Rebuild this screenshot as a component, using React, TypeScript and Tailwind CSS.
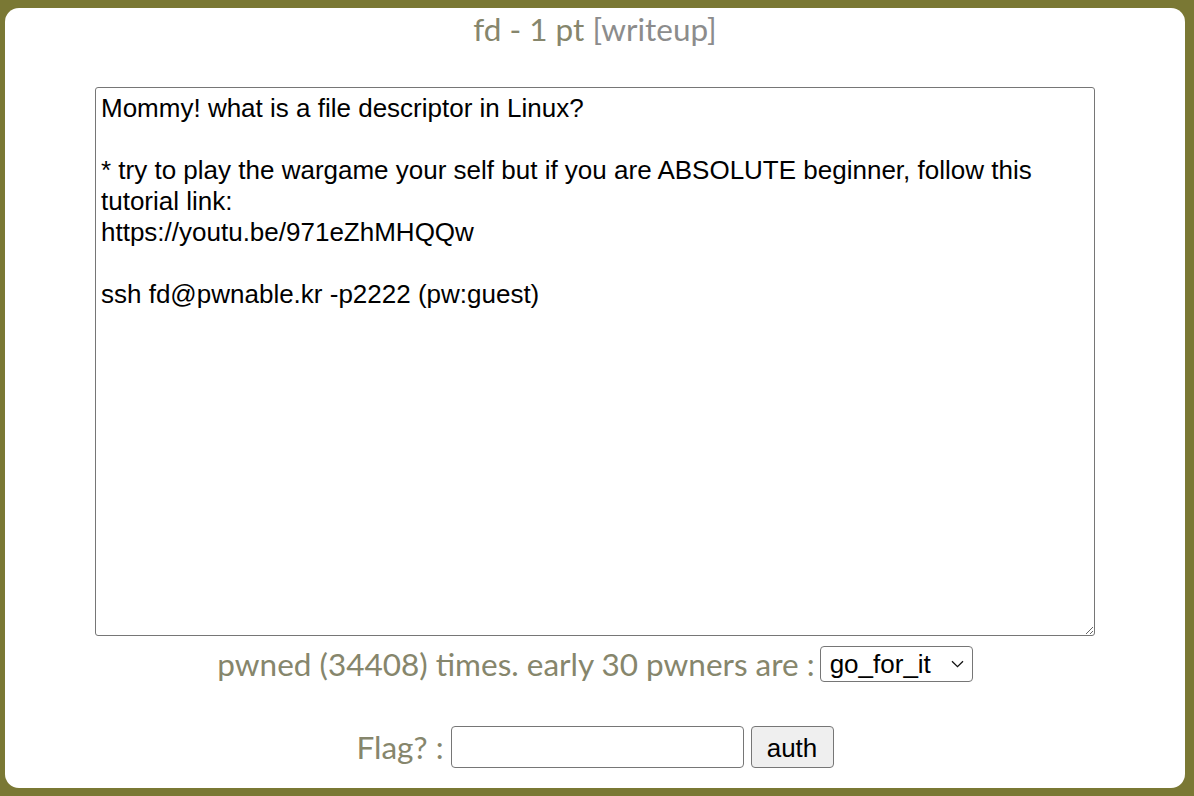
export default function App() {
  const desc =
    "Mommy! what is a file descriptor in Linux?\n\n* try to play the wargame your self but if you are ABSOLUTE beginner, follow this tutorial link:\nhttps://youtu.be/971eZhMHQQw\n\nssh fd@pwnable.kr -p2222 (pw:guest)";

  return (
    <div className="h-[796px] w-full bg-[#7a7834] pt-[8px] pb-[8px] pl-[5px] pr-[9px]">
      <div className="h-full bg-white rounded-[14px] flex flex-col items-center font-['Lato',sans-serif] text-[#86866c]">
        <div className="mt-[3px] text-[31.5px] leading-[36px]">
          fd - 1 pt <span className="text-[#8c8c8c]">[writeup]</span>
        </div>
        <textarea
          readOnly
          className="mt-[40px] w-[1000px] h-[549px] border border-[#767676] rounded-[3px] px-[5px] py-[5px] text-black text-[26px] leading-[31px] font-['Liberation_Sans',Arial,sans-serif] resize-y outline-none"
          defaultValue={desc}
        />
        <div className="mt-[10px] flex items-center gap-[5px] text-[31.5px] leading-[36px]">
          <span>pwned (34408) times. early 30 pwners are :</span>
          <div className="relative flex">
            <select className="h-[36px] w-[153px] border border-[#767676] rounded-[4px] pl-[9px] pr-[28px] text-black text-[26px] leading-[34px] font-['Liberation_Sans',Arial,sans-serif] bg-white appearance-none">
              <option>go_for_it</option>
            </select>
            <svg
              className="absolute right-[9px] top-[14px] pointer-events-none"
              width="13"
              height="8"
              viewBox="0 0 13 8"
              fill="none"
              stroke="#111"
              strokeWidth="1.3"
            >
              <path d="M1 1.2 L6.5 6.6 L12 1.2" />
            </svg>
          </div>
        </div>
        <div className="mt-[44px] flex items-center text-[31.5px] leading-[42px]">
          <span>Flag? :</span>
          <input className="ml-[7px] h-[42px] w-[293px] border border-[#767676] rounded-[4px] px-[6px] text-black text-[26px]" />
          <button className="ml-[7px] h-[42px] w-[83px] border border-[#767676] rounded-[4px] bg-[#efefef] text-black text-[26px] font-['Liberation_Sans',Arial,sans-serif]">
            auth
          </button>
        </div>
      </div>
    </div>
  );
}
